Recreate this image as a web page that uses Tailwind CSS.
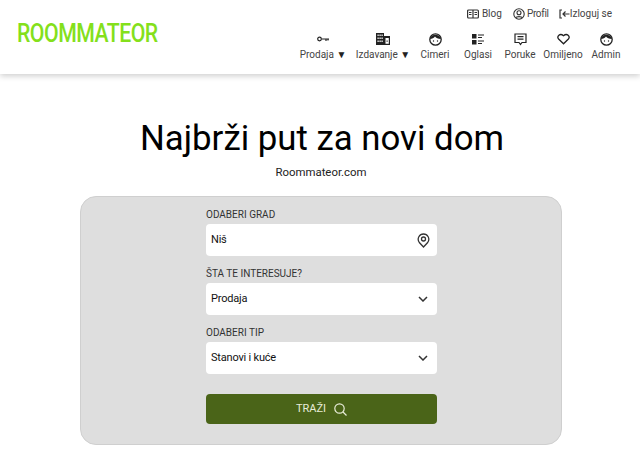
<!DOCTYPE html>
<html lang="sr">
<head>
  <meta charset="UTF-8" />
  <meta name="viewport" content="width=device-width, initial-scale=1" />
  <title>Roommateor</title>
  <script src="https://cdn.jsdelivr.net/npm/@tailwindcss/browser@4"></script>
</head>
<body class="min-h-screen bg-white font-['Roboto',sans-serif] text-black overflow-hidden">
  <!-- Top Navigation -->
  <header class="h-[74px] bg-white shadow-[0_2px_6px_rgba(0,0,0,0.2)] flex justify-between pl-[17px] pr-[16px]">
    <a href="#" class="mt-[20px] text-[25px] leading-[28px] h-[28px] font-['Roboto',sans-serif] font-medium text-[#84e01b] origin-left scale-x-[0.85] tracking-[-0.6px]">ROOMMATEOR</a>
    <div class="flex flex-col items-end">
      <!-- Small links -->
      <nav class="mt-[7px] flex items-center text-[10px] leading-[14px] text-[#444] pr-[12px]">
        <a href="#" class="flex items-center gap-[3px] mr-[11px]">
          <svg width="12" height="10" viewBox="0 0 12 10" fill="none" stroke="#333" stroke-width="1.2"><rect x="0.6" y="1" width="10.8" height="8" rx="1"/><path d="M6 1v8M2 3.500h2.500M2 5.500h2.500M7.500 3.500H10M7.500 5.500H10"/></svg>
          Blog
        </a>
        <a href="#" class="flex items-center gap-[2px] mr-[10px] tracking-[-0.3px]">
          <svg width="12" height="12" viewBox="0 0 12 12" fill="none" stroke="#333" stroke-width="1.1"><circle cx="6" cy="6" r="5.2"/><circle cx="6" cy="4.7" r="2"/><path d="M2.6 9.8C3.4 8.2 8.6 8.2 9.4 9.8"/></svg>
          Profil
        </a>
        <a href="#" class="flex items-center">
          <svg width="11" height="10" viewBox="0 0 11 10" fill="none" stroke="#333" stroke-width="1.2"><path d="M3 1H1v8h2M10.500 5H4M6.500 2.500 4 5l2.500 2.500"/></svg>
          Izloguj se
        </a>
      </nav>
      <!-- Main links -->
      <nav class="mt-[9px] flex items-start text-[10px] leading-[14px] text-[#444]">
        <a href="#" class="flex flex-col items-center w-[54px]">
          <span class="h-[18px] flex items-center">
            <svg width="12" height="6" viewBox="0 0 12 6" fill="none" stroke="#222"><circle cx="2.5" cy="3" r="1.8" stroke-width="1.2"/><path d="M4.500 3H12M9 3v2M11 3v1.500" stroke-width="1.2"/></svg>
          </span>
          <span class="whitespace-nowrap">Prodaja <span class="text-[10px] text-[#222]">▼</span></span>
        </a>
        <a href="#" class="flex flex-col items-center w-[66px]">
          <span class="h-[18px] flex items-center">
            <svg width="14" height="12" viewBox="0 0 14 12" fill="#222"><path d="M0 0h8v12H0zM8 3h6v9H8z"/><g fill="#fff"><path d="M1.500 1.500h1.200v1.500H1.500zM3.500 1.500h1.200v1.500H3.500zM5.500 1.500h1.200v1.500H5.500zM1.500 4.500h1.200V6H1.500zM3.500 4.500h1.200V6H3.500zM5.500 4.500h1.200V6H5.500zM1.500 7.500h1.200V9H1.500zM3.500 7.500h1.200V9H3.500zM5.500 7.500h1.200V9H5.500zM9.500 5h3.300v5.800H9.500z"/></g><path d="M10.500 7.500h1.200v1.200h-1.200z"/></svg>
          </span>
          <span class="whitespace-nowrap">Izdavanje <span class="text-[10px] text-[#222]">▼</span></span>
        </a>
        <a href="#" class="flex flex-col items-center w-[38px]">
          <span class="h-[18px] flex items-center">
            <svg width="13" height="13" viewBox="0 0 13 13"><circle cx="6.500" cy="6.500" r="5.700" fill="#fff" stroke="#222" stroke-width="1.300"/><path d="M1 6C2 1 10 0 12 6 9 6 7 5 6 3.500 5 5 3 6 1 6z" fill="#222"/><circle cx="4.500" cy="8" r=".7" fill="#222"/><circle cx="8.500" cy="8" r=".7" fill="#222"/></svg>
          </span>
          <span>Cimeri</span>
        </a>
        <a href="#" class="flex flex-col items-center w-[48px]">
          <span class="h-[18px] flex items-center">
            <svg width="12" height="11" viewBox="0 0 12 11" fill="#222"><path d="M0 0h4.500v4.500H0zM0 6h4.500v4.500H0z"/><path d="M6 .5h6v1H6zM6 3h4v1H6zM6 6.500h6v1H6zM6 9h4v1H6z"/></svg>
          </span>
          <span>Oglasi</span>
        </a>
        <a href="#" class="flex flex-col items-center w-[36px]">
          <span class="h-[18px] flex items-center">
            <svg width="13" height="13" viewBox="0 0 13 13" fill="none" stroke="#222" stroke-width="1.200"><path d="M1 1h11v8.500H8l-1.500 2-1.500-2H1zM3.500 3.700h6M3.500 6.200h6"/></svg>
          </span>
          <span>Poruke</span>
        </a>
        <a href="#" class="flex flex-col items-center w-[50px]">
          <span class="h-[18px] flex items-center">
            <svg width="13" height="12" viewBox="0 0 13 12" fill="none" stroke="#222" stroke-width="1.300"><path d="M6.500 10.800 1.600 6C-.5 3.500 2.800-.3 6.500 2.700 10.200-.3 13.500 3.500 11.400 6z"/></svg>
          </span>
          <span>Omiljeno</span>
        </a>
        <a href="#" class="flex flex-col items-center w-[36px]">
          <span class="h-[18px] flex items-center">
            <svg width="13" height="13" viewBox="0 0 13 13"><circle cx="6.500" cy="6.500" r="5.700" fill="#fff" stroke="#222" stroke-width="1.300"/><path d="M1 6C2 1 10 0 12 6 9 6 7 5 6 3.500 5 5 3 6 1 6z" fill="#222"/><circle cx="4.500" cy="8" r=".7" fill="#222"/><circle cx="8.500" cy="8" r=".7" fill="#222"/></svg>
          </span>
          <span>Admin</span>
        </a>
      </nav>
    </div>
  </header>

  <!-- Main Content -->
  <main class="flex flex-col items-center">
    <h1 class="mt-[40px] ml-[4px] text-[34.800px] leading-[48px] font-normal text-black">Najbrži put za novi dom</h1>
    <p class="mt-[2px] ml-[2px] text-[11.400px] leading-[16px] text-[#222]">Roommateor.com</p>

    <form class="mt-[16px] ml-[2px] w-[482px] h-[249px] bg-[#dedede] border border-[#cfcfcf] rounded-[16px] flex flex-col items-center pt-[11px]">
      <div class="w-[231px] ml-[1px]">
        <label class="block text-[10px] leading-[14px] text-[#333] uppercase">Odaberi grad</label>
        <div class="mt-[2px] h-[32px] bg-white rounded-[4px] flex items-center justify-between pl-[5px] pr-[7px] text-[11px] tracking-[-0.2px] text-[#111]">
          <span>Niš</span>
          <svg width="13" height="15" viewBox="0 0 13 15" fill="none" stroke="#333" stroke-width="1.300"><path d="M6.500 14 2.300 9.500C-.5 5.500 2.500 1 6.500 1s7 4.500 4.200 8.500z"/><circle cx="6.500" cy="6" r="2"/></svg>
        </div>
        <label class="block mt-[11px] text-[10px] leading-[14px] text-[#333] uppercase">Šta te interesuje?</label>
        <div class="mt-[2px] h-[32px] bg-white rounded-[4px] flex items-center justify-between pl-[5px] pr-[9px] text-[11px] tracking-[-0.2px] text-[#111]">
          <span>Prodaja</span>
          <svg width="10" height="6" viewBox="0 0 10 6" fill="none" stroke="#333" stroke-width="1.500"><path d="m1 1 4 4 4-4"/></svg>
        </div>
        <label class="block mt-[11px] text-[10px] leading-[14px] text-[#333] uppercase">Odaberi tip</label>
        <div class="mt-[2px] h-[32px] bg-white rounded-[4px] flex items-center justify-between pl-[5px] pr-[9px] text-[11px] tracking-[-0.2px] text-[#111]">
          <span>Stanovi i kuće</span>
          <svg width="10" height="6" viewBox="0 0 10 6" fill="none" stroke="#333" stroke-width="1.500"><path d="m1 1 4 4 4-4"/></svg>
        </div>
        <button type="button" class="mt-[20px] w-full h-[30px] bg-[#4a6418] rounded-[4px] flex items-center justify-center gap-[8px] text-[11px] text-[#e8ecd8]">
          TRAŽI
          <svg width="13" height="13" viewBox="0 0 13 13" fill="none" stroke="#e8ecd8" stroke-width="1.200"><circle cx="5.500" cy="5.500" r="4.700"/><path d="m9 9 3.500 3.500"/></svg>
        </button>
      </div>
    </form>
  </main>
</body>
</html>
